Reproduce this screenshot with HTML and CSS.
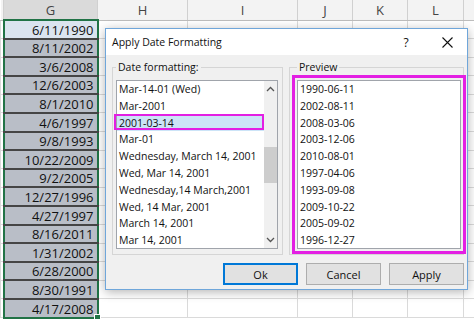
FILE: index.html
```html
<!DOCTYPE html>
<html>
<head>
    <meta name="viewport" content="width=device-width, initial-scale=1.0">
    <link rel="stylesheet" href="styles.css">
</head>
<body>

<table class="sheet">
    <colgroup>
        <col class="col-f"><col class="col-g"><col class="col-h"><col class="col-i">
        <col class="col-j"><col class="col-k"><col class="col-l"><col class="col-m">
    </colgroup>
    <thead>
        <tr>
            <th></th><th class="sel">G</th><th>H</th><th>I</th><th>J</th><th>K</th><th>L</th><th></th>
        </tr>
    </thead>
    <tbody id="rows"></tbody>
</table>

<div class="dialog">
    <div class="title-bar">
        <span class="title">Apply Date Formatting</span>
        <span class="help">?</span>
        <span class="close">
            <svg width="11" height="11" viewBox="0 0 11 11"><path d="M0.5 0.5 L10.5 10.5 M10.5 0.5 L0.5 10.5" stroke="#111" stroke-width="1.1" fill="none"/></svg>
        </span>
    </div>

    <div class="dialog-body">
        <div class="groups">
            <fieldset class="group group-formats">
                <legend>Date formatting:</legend>
                <div class="listbox formats">
                    <ul class="items">
                        <li>Mar-14-01 (Wed)</li>
                        <li>Mar-2001</li>
                        <li class="selected">2001-03-14</li>
                        <li>Mar-01</li>
                        <li>Wednesday, March 14, 2001</li>
                        <li>Wed, Mar 14, 2001</li>
                        <li>Wednesday,14 March,2001</li>
                        <li>Wed, 14 Mar, 2001</li>
                        <li>March 14, 2001</li>
                        <li>Mar 14, 2001</li>
                    </ul>
                    <div class="scrollbar">
                        <svg class="arrow" width="9" height="6" viewBox="0 0 9 6"><path d="M1 5 L4.5 1.5 L8 5" stroke="#555" stroke-width="1.3" fill="none"/></svg>
                        <div class="thumb"></div>
                        <svg class="arrow arrow-down" width="9" height="6" viewBox="0 0 9 6"><path d="M1 1 L4.5 4.5 L8 1" stroke="#555" stroke-width="1.3" fill="none"/></svg>
                    </div>
                </div>
            </fieldset>

            <fieldset class="group group-preview">
                <legend>Preview</legend>
                <div class="listbox preview">
                    <ul class="items" id="previewList"></ul>
                </div>
            </fieldset>
        </div>

        <div class="buttons">
            <button class="btn primary">Ok</button>
            <button class="btn">Cancel</button>
            <button class="btn">Apply</button>
        </div>
    </div>
</div>

<script>
    const dates = [
        '6/11/1990', '8/11/2002', '3/6/2008', '12/6/2003', '8/1/2010', '4/6/1997',
        '9/8/1993', '10/22/2009', '9/2/2005', '12/27/1996', '4/27/1997', '8/16/2011',
        '1/31/2002', '6/28/2000', '8/30/1991', '4/17/2008'
    ];
    const previews = [
        '1990-06-11', '2002-08-11', '2008-03-06', '2003-12-06', '2010-08-01',
        '1997-04-06', '1993-09-08', '2009-10-22', '2005-09-02', '1996-12-27'
    ];

    // Build the spreadsheet rows
    const rows = document.getElementById('rows');
    dates.forEach((date) => {
        const tr = document.createElement('tr');
        tr.appendChild(document.createElement('td'));
        const cell = document.createElement('td');
        cell.classList.add('g');
        cell.textContent = date;
        tr.appendChild(cell);
        for (let i = 0; i < 6; i++) {
            tr.appendChild(document.createElement('td'));
        }
        rows.appendChild(tr);
    });

    // Fill the preview list
    const previewList = document.getElementById('previewList');
    previews.forEach((text) => {
        const li = document.createElement('li');
        li.textContent = text;
        previewList.appendChild(li);
    });
</script>

</body>
</html>
```

FILE: styles.css
```css
body {
    margin: 0;
    padding: 0;
    background-color: #fff;
    font-family: "Open Sans", Arial, sans-serif;
    overflow: hidden;
}

/* Spreadsheet */

.sheet {
    border-collapse: collapse;
    table-layout: fixed;
    width: 474px;
}

.col-f { width: 3px; }
.col-g { width: 94px; }
.col-h { width: 90px; }
.col-i { width: 110px; }
.col-j { width: 55px; }
.col-k { width: 55px; }
.col-l { width: 56px; }
.col-m { width: 11px; }

.sheet th {
    height: 19px;
    padding: 0;
    background-color: #f3f3f3;
    border-right: 1px solid #d0d0d0;
    border-bottom: 1px solid #bdbdbd;
    font-weight: normal;
    font-size: 13px;
    color: #444;
}

.sheet th.sel {
    background-color: #dadada;
    border-bottom: 2px solid #217346;
}

.sheet tbody tr {
    height: 18.6px;
}

.sheet td {
    padding: 0;
    border: 1px solid #dadada;
}

.sheet td.g {
    position: relative;
    background-color: #b9bec7;
    border-left: 2px solid #217346;
    border-right: 2px solid #217346;
    border-bottom: 2px solid #454545;
    text-align: right;
    vertical-align: bottom;
    padding: 0 3px 0 0;
    font-size: 13px;
    line-height: 16px;
    color: #111;
}

.sheet tr:first-child td.g {
    background-color: #dbe4ef;
}

.sheet tr:last-child td.g {
    border-bottom: 2px solid #217346;
}

.sheet tr:last-child td.g::after {
    content: "";
    position: absolute;
    right: -4px;
    bottom: -4px;
    width: 5px;
    height: 5px;
    background-color: #217346;
    border: 1px solid #fff;
}

/* Dialog */

.dialog {
    position: absolute;
    left: 105px;
    top: 28px;
    width: 361px;
    height: 260px;
    display: flex;
    flex-direction: column;
    background-color: #f0f0f0;
    border: 1px solid #6fa6da;
    box-shadow: 0 2px 10px rgba(0, 0, 0, 0.3);
    font-size: 10.5px;
    color: #111;
}

.title-bar {
    height: 26px;
    display: flex;
    align-items: center;
    padding: 0 5px 0 6px;
    background-color: #fff;
}

.title {
    flex: 1;
    font-size: 10.5px;
}

.help {
    width: 16px;
    text-align: center;
    font-size: 12px;
    margin-right: 18px;
}

.close {
    width: 30px;
    display: flex;
    justify-content: center;
}

.dialog-body {
    flex: 1;
    padding: 5px 3px 0 6px;
    display: flex;
    flex-direction: column;
}

.groups {
    display: flex;
    gap: 6px;
}

.group {
    margin: 0;
    box-sizing: border-box;
    min-width: 0;
    flex: none;
    border: 1px solid #d5d5d5;
}

.group legend {
    padding: 0 2px;
    font-size: 10.5px;
    line-height: 14px;
}

.group-formats {
    width: 171px;
    padding: 0 4px 5px 3px;
}

.group-preview {
    width: 175px;
    padding: 0 2px 5px 7px;
}

.listbox {
    margin-top: 6px;
    height: 169px;
    box-sizing: border-box;
    display: flex;
    background-color: #fff;
    border: 1px solid #a0a4ab;
}

.formats {
    width: 162px;
}

.preview {
    width: 164px;
    outline: 3px solid #e31fe3;
    outline-offset: 2px;
}

.items {
    flex: 1;
    min-width: 0;
    list-style: none;
    margin: 0;
    padding: 0;
}

.items li {
    height: 16.8px;
    line-height: 16.8px;
    padding-left: 2px;
    white-space: nowrap;
}

.items li.selected {
    position: relative;
    background-color: #cce4f7;
}

.items li.selected::after {
    content: "";
    position: absolute;
    left: -3px;
    right: 0;
    top: -1px;
    bottom: 1px;
    border: 2px solid #e31fe3;
}

.scrollbar {
    width: 13px;
    display: flex;
    flex-direction: column;
    align-items: center;
    background-color: #f0f0f0;
}

.arrow {
    margin-top: 5px;
}

.arrow-down {
    margin-top: auto;
    margin-bottom: 5px;
}

.thumb {
    margin-top: 55px;
    width: 13px;
    height: 36px;
    background-color: #cdcdcd;
}

.buttons {
    display: flex;
    justify-content: flex-end;
    gap: 8px;
    margin-top: 8px;
}

.btn {
    width: 75px;
    height: 22px;
    padding: 0;
    font-family: "Open Sans", Arial, sans-serif;
    font-size: 11px;
    color: #111;
    background-color: #e1e1e1;
    border: 1px solid #adadad;
}

.btn.primary {
    border-color: #0078d7;
    box-shadow: inset 0 0 0 1px #0078d7;
}
```
